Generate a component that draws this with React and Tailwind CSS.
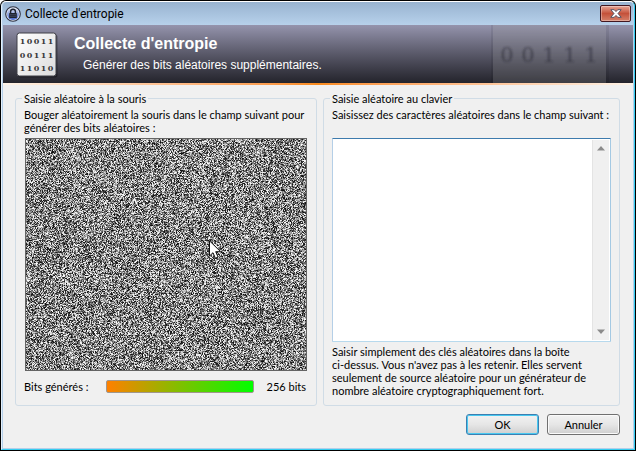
import { useEffect, useRef } from "react";

function NoiseField() {
  const ref = useRef(null);
  useEffect(() => {
    const canvas = ref.current;
    const ctx = canvas.getContext("2d");
    const image = ctx.createImageData(canvas.width, canvas.height);
    let seed = 123456789;
    for (let i = 0; i < image.data.length; i += 4) {
      seed ^= seed << 13;
      seed ^= seed >>> 17;
      seed ^= seed << 5;
      const v = 12 + Math.round(((seed >>> 8) & 255) * 0.95);
      image.data[i] = v;
      image.data[i + 1] = v;
      image.data[i + 2] = v;
      image.data[i + 3] = 255;
    }
    ctx.putImageData(image, 0, 0);
  }, []);
  return (
    <div className="relative mx-px mt-1 h-[233px] border border-[#646464]">
      <canvas ref={ref} width={280} height={231} className="block h-full w-full [image-rendering:pixelated]" />
      <svg className="absolute top-[101px] left-[183px] h-[20px] w-[13px]" viewBox="0 0 13 20" aria-hidden="true">
        <path d="M.5.8V16l3.5-3.3 2.4 5.6 2.7-1.2-2.4-5.4h4.9z" fill="#fff" stroke="#111" strokeWidth="1" />
      </svg>
    </div>
  );
}

function LockIcon() {
  return (
    <svg className="size-4" viewBox="0 0 16 16" aria-hidden="true">
      <defs>
        <linearGradient id="lockDisc" x1="0" y1="0" x2="0" y2="1">
          <stop offset="0" stopColor="#dde4f5" />
          <stop offset="0.5" stopColor="#8fa3dc" />
          <stop offset="1" stopColor="#4668cf" />
        </linearGradient>
      </defs>
      <circle cx="8" cy="8" r="7.3" fill="#e8edf6" stroke="#2c3040" strokeWidth="1.1" />
      <circle cx="8" cy="8" r="6" fill="url(#lockDisc)" />
      <path d="M5.6 7.5V5.6a2.4 2.4 0 0 1 4.8 0v1.9" fill="none" stroke="#20242f" strokeWidth="1.4" />
      <rect x="4.2" y="7" width="7.6" height="5" rx="0.6" fill="#20242f" />
      <path d="M5 8.7h6M5 10.3h6" stroke="#56607c" strokeWidth="0.6" />
    </svg>
  );
}

function BinaryIcon() {
  return (
    <svg className="h-[46px] w-[42px]" viewBox="0 0 42 46" aria-hidden="true">
      <defs>
        <linearGradient id="sheet" x1="0" y1="0" x2="1" y2="1">
          <stop offset="0" stopColor="#ffffff" />
          <stop offset="1" stopColor="#dcdcdc" />
        </linearGradient>
      </defs>
      <rect x="2" y="2.5" width="39.5" height="43" rx="2.5" fill="#000" opacity="0.35" />
      <rect x="1" y="1" width="39" height="43" rx="2.5" fill="url(#sheet)" stroke="#3e3e46" strokeWidth="1" />
      <g fill="#3a3a3a" fontFamily="'DejaVu Serif', serif" fontWeight="bold" fontSize="8">
        {["10011", "00111", "11010"].map((row, y) =>
          row.split("").map((d, x) => (
            <text key={`${y}${x}`} x={6.5 + x * 7} y={12 + y * 13.5} textAnchor="middle">{d}</text>
          ))
        )}
      </g>
    </svg>
  );
}

function Watermark() {
  return (
    <svg className="h-[58px] w-[118px]" viewBox="0 0 118 58" aria-hidden="true">
      <defs>
        <filter id="soften"><feGaussianBlur stdDeviation="1.3" /></filter>
      </defs>
      <rect x="0" y="0" width="118" height="58" fill="#000" opacity="0.08" />
      <rect x="2" y="0" width="113" height="58" fill="#d8d8d8" opacity="0.16" />
      <g fill="#20202a" opacity="0.5" filter="url(#soften)" fontFamily="'DejaVu Serif', serif" fontSize="21">
        {"00111".split("").map((d, x) => (
          <text key={x} x={16 + x * 21} y="37" textAnchor="middle">{d}</text>
        ))}
      </g>
    </svg>
  );
}

function Group({ title, children }) {
  return (
    <fieldset className="min-w-0 rounded-[3px] border border-[#d0dce6] px-2 pt-[3px] pb-2">
      <legend className="-ml-[2px] px-0.5 leading-[13px]">{title}</legend>
      {children}
    </fieldset>
  );
}

export default function App() {
  return (
    <div className="flex min-h-screen flex-col rounded-t-[6px] bg-black p-px font-[Lato,'Liberation_Sans',sans-serif] text-[11px] leading-[13px] text-black">
      <div className="flex grow flex-col rounded-t-[5px] border border-t-white border-r-[#35cdf0] border-b-[#35cdf0] border-l-[#e4f0fb] bg-[#b5cfe9] px-px pb-px">
        <header className="flex h-[23px] items-center rounded-t-[4px] bg-linear-to-b from-[#98b3d0] to-[#b7d1eb] pr-[2px] pl-[2px]">
          <LockIcon />
          <h1 className="ml-1 grow font-[Roboto,sans-serif] text-[12px] leading-4">Collecte d'entropie</h1>
          <button
            type="button"
            aria-label="Fermer"
            className="flex h-[17px] w-[31px] items-center justify-center rounded-[2px] border border-[#421821] bg-linear-to-b from-[#e6a596] from-0% via-[#c4513a] via-50% to-[#d4806a] to-100% shadow-[inset_0_0_0_1px_#ffffff55]"
          >
            <svg className="h-[9px] w-[12px]" viewBox="0 0 12 9" aria-hidden="true">
              <path d="M.8.7h3.4L6 2.6 7.8.7h3.4L8 4.5l3.2 3.8H7.8L6 6.4 4.2 8.3H.8L4 4.5z" fill="#fff" stroke="#4a4e60" strokeWidth="0.9" />
            </svg>
          </button>
        </header>

        <div className="flex h-[58px] bg-linear-to-b from-[#9594ad] to-[#24242c] pr-[24px] pl-[13px]">
          <div className="pt-[7px]"><BinaryIcon /></div>
          <div className="ml-4 grow pt-[9px] font-['Liberation_Sans',Arial,sans-serif] text-white">
            <h2 className="text-[16px] leading-5 font-bold">Collecte d'entropie</h2>
            <p className="ml-[9px] text-[12px] leading-[22px]">Générer des bits aléatoires supplémentaires.</p>
          </div>
          <Watermark />
        </div>
        <div className="h-[2px] bg-linear-to-r from-[#fdf3e8] via-[#f98b1c] to-[#fdf3e8]" />

        <main className="grow bg-[#f0f0f0] pt-[7px] pr-[13px] pb-3 pl-3">
          <div className="grid grid-cols-[302fr_297fr] gap-[6px]">
            <Group title="Saisie aléatoire à la souris">
              <p className="h-[26px]">
                Bouger aléatoirement la souris dans le champ suivant pour générer des bits aléatoires :
              </p>
              <NoiseField />
              <div className="mt-[9px] flex items-center">
                <label htmlFor="bits" className="w-[82px]">Bits générés :</label>
                <div
                  id="bits"
                  role="progressbar"
                  aria-label="Bits générés"
                  aria-valuenow={256}
                  aria-valuemax={256}
                  className="h-[13px] w-[148px] rounded-[2px] border border-[#a0968c] bg-linear-to-r/srgb from-[#ff8000] to-[#00ff00]"
                />
                <span className="grow pr-0.5 text-right">256 bits</span>
              </div>
            </Group>

            <Group title="Saisie aléatoire au clavier">
              <label htmlFor="keys" className="block h-[26px] whitespace-nowrap">
                Saisissez des caractères aléatoires dans le champ suivant :
              </label>
              <div className="mt-1 flex h-[204px] rounded-[1px] border border-t-[#3d7bad] border-r-[#a4c9e3] border-b-[#b7d9ed] border-l-[#b5cfe7] bg-white">
                <textarea id="keys" className="min-w-0 grow resize-none outline-none" />
                <div className="my-px mr-px flex w-[17px] flex-col items-center justify-between border-l border-[#e4e4e4] bg-[#f0f0f0] py-1.5" aria-hidden="true">
                  <svg className="h-[5px] w-[8px]" viewBox="0 0 8 5"><path d="M0 4.5 4 0l4 4.5z" fill="#8b8b8b" /></svg>
                  <svg className="h-[5px] w-[8px]" viewBox="0 0 8 5"><path d="M0 .5 4 5 8 .5z" fill="#8b8b8b" /></svg>
                </div>
              </div>
              <p className="mt-[3px]">
                Saisir simplement des clés aléatoires dans la boîte
                <br />
                ci-dessus. Vous n'avez pas à les retenir. Elles servent
                <br />
                seulement de source aléatoire pour un générateur de
                <br />
                nombre aléatoire cryptographiquement fort.
              </p>
            </Group>
          </div>

          <div className="mt-2 flex justify-end gap-2">
            <button
              type="button"
              className="h-[21px] w-[73px] rounded-[3px] border border-[#3c7fb1] bg-linear-to-b from-[#f2f2f2] from-0% via-[#e6e6e6] via-50% to-[#cfcfcf] to-100% shadow-[inset_0_0_0_1px_#48c8f0]"
            >
              OK
            </button>
            <button
              type="button"
              className="h-[21px] w-[73px] rounded-[3px] border border-[#707070] bg-linear-to-b from-[#f2f2f2] from-0% via-[#e6e6e6] via-50% to-[#cfcfcf] to-100% shadow-[inset_0_0_0_1px_#fafafa]"
            >
              Annuler
            </button>
          </div>
        </main>
      </div>
    </div>
  );
}
